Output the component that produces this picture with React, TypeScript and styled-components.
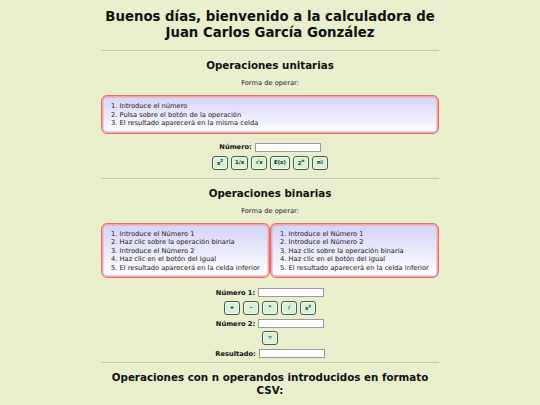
import React, { FC } from "react";
import styled, { createGlobalStyle } from "styled-components";

const GlobalStyle = createGlobalStyle`
  html, body {
    margin: 0;
    padding: 0;
    background: #e9efcd;
  }
  body {
    font-family: "DejaVu Sans", Verdana, sans-serif;
    color: #111;
  }
`;

const Page = styled.div`
  width: 338px;
  margin: 0 auto;
  padding-top: 9px;
  text-align: center;
`;

const Title = styled.h1`
  margin: 0;
  font-size: 13.3px;
  line-height: 16px;
  font-weight: bold;
`;

const Rule = styled.hr<{ $top?: number }>`
  margin: ${(p) => p.$top ?? 9}px 0 0;
  border: none;
  border-top: 1px solid #c4c8b4;
  height: 0;
`;

const SectionTitle = styled.h2`
  margin: 8px 0 0;
  font-size: 10.3px;
  line-height: 13px;
  font-weight: bold;
`;

const Hint = styled.p`
  margin: 7px 0 0;
  font-size: 6.7px;
  line-height: 9px;
  color: #222;
`;

const BoxRow = styled.div<{ $cols: number }>`
  display: grid;
  grid-template-columns: repeat(${(p) => p.$cols}, 1fr);
  margin-top: 7px;
`;

const StepsBox = styled.div`
  border: 1px solid #e07070;
  box-shadow: inset 0 0 0 1.5px #f4a4a4;
  border-radius: 6px;
  background: linear-gradient(#d3d3f7, #ffffff);
  padding: 6px 3px 5px 9px;
  text-align: left;
`;

const Steps = styled.ol`
  margin: 0;
  padding: 0;
  list-style: none;
  font-size: 6.7px;
  line-height: 8.5px;
  color: #1a1a1a;
  white-space: nowrap;
`;

const Field = styled.div<{ $top: number }>`
  display: flex;
  justify-content: center;
  align-items: center;
  gap: 3px;
  margin-top: ${(p) => p.$top}px;
`;

const Label = styled.label`
  font-size: 6.7px;
  font-weight: bold;
  color: #111;
`;

const Input = styled.input`
  width: 66px;
  height: 9px;
  box-sizing: border-box;
  margin: 0;
  padding: 0;
  border: 1px solid #9a9a9a;
  background: #fff;
`;

const Buttons = styled.div<{ $top: number }>`
  display: flex;
  justify-content: center;
  gap: 3px;
  margin-top: ${(p) => p.$top}px;
`;

const OpButton = styled.button`
  min-width: 16px;
  height: 14px;
  padding: 0 3px;
  margin: 0;
  box-sizing: border-box;
  border: 1px solid #4d5a4d;
  border-radius: 3px;
  background: #d6f2d6;
  box-shadow: inset 0 0 0 1px #eefbee;
  font-family: "DejaVu Sans", Verdana, sans-serif;
  font-size: 5.3px;
  font-weight: bold;
  color: #222;
  line-height: 1;
  sup {
    font-size: 4px;
  }
`;

const unarySteps = [
  "1. Introduce el número",
  "2. Pulsa sobre el botón de la operación",
  "3. El resultado aparecerá en la misma celda",
];

const binaryA = [
  "1. Introduce el Número 1",
  "2. Haz clic sobre la operación binaria",
  "3. Introduce el Número 2",
  "4. Haz clic en el botón del igual",
  "5. El resultado aparecerá en la celda inferior",
];

const binaryB = [
  "1. Introduce el Número 1",
  "2. Introduce el Número 2",
  "3. Haz clic sobre la operación binaria",
  "4. Haz clic en el botón del igual",
  "5. El resultado aparecerá en la celda inferior",
];

const StepList: FC<{ items: string[] }> = ({ items }) => (
  <StepsBox>
    <Steps>
      {items.map((s) => (
        <li key={s}>{s}</li>
      ))}
    </Steps>
  </StepsBox>
);

const App: FC = () => (
  <>
    <GlobalStyle />
    <Page>
      <Title>
        Buenos días, bienvenido a la calculadora de
        <br />
        Juan Carlos García González
      </Title>
      <Rule />

      <SectionTitle>Operaciones unitarias</SectionTitle>
      <Hint>Forma de operar:</Hint>
      <BoxRow $cols={1}>
        <StepList items={unarySteps} />
      </BoxRow>
      <Field $top={9}>
        <Label>Número:</Label>
        <Input />
      </Field>
      <Buttons $top={4}>
        <OpButton>
          x<sup>2</sup>
        </OpButton>
        <OpButton>1/x</OpButton>
        <OpButton>√x</OpButton>
        <OpButton>E(x)</OpButton>
        <OpButton>
          2<sup>n</sup>
        </OpButton>
        <OpButton>n!</OpButton>
      </Buttons>
      <Rule $top={8} />

      <SectionTitle>Operaciones binarias</SectionTitle>
      <Hint>Forma de operar:</Hint>
      <BoxRow $cols={2}>
        <StepList items={binaryA} />
        <StepList items={binaryB} />
      </BoxRow>
      <Field $top={10}>
        <Label>Número 1:</Label>
        <Input />
      </Field>
      <Buttons $top={4}>
        <OpButton>+</OpButton>
        <OpButton>-</OpButton>
        <OpButton>*</OpButton>
        <OpButton>/</OpButton>
        <OpButton>
          x<sup>y</sup>
        </OpButton>
      </Buttons>
      <Field $top={4}>
        <Label>Número 2:</Label>
        <Input />
      </Field>
      <Buttons $top={3}>
        <OpButton>=</OpButton>
      </Buttons>
      <Field $top={4}>
        <Label>Resultado:</Label>
        <Input />
      </Field>
      <Rule $top={4} />

      <SectionTitle>Operaciones con n operandos introducidos en formato CSV:</SectionTitle>
      <Hint>Forma de operar:</Hint>
    </Page>
  </>
);

export default App;
